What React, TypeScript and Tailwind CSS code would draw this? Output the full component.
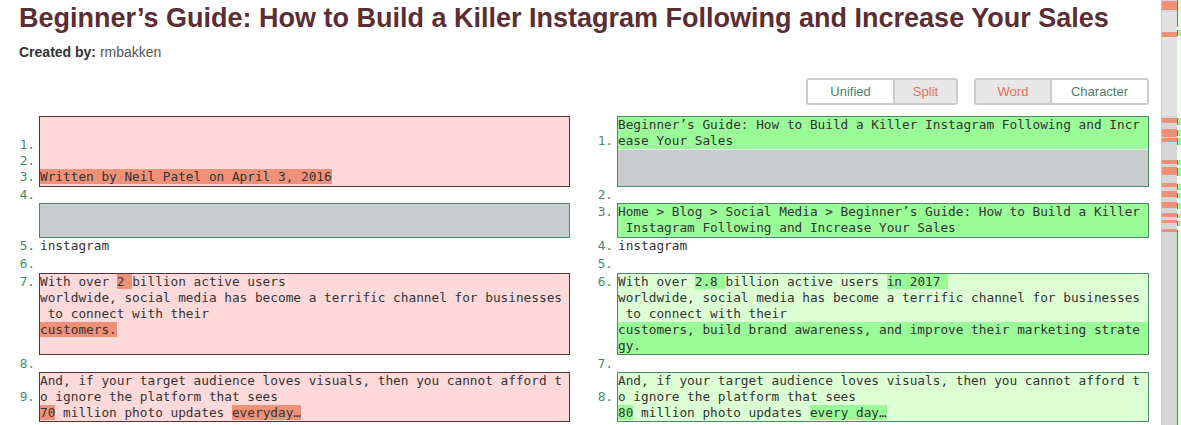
import React from "react";

const Del = ({ children }: { children: React.ReactNode }) => (
  <span className="bg-[#ee9178]">{children}</span>
);
const Add = ({ children }: { children: React.ReactNode }) => (
  <span className="bg-[#9afc98]">{children}</span>
);
const L = ({ children }: { children?: React.ReactNode }) => (
  <div className="h-[16px] whitespace-pre">{children}</div>
);

const Num = ({ pt, nums }: { pt: string; nums: string[] }) => (
  <div className={`text-right pr-[4px] text-[#468c6c] ${pt}`}>
    {nums.map((n) => (
      <div key={n} className="h-[16px]">
        {n}
      </div>
    ))}
  </div>
);

const redBlocks: [number, number][] = [
  [1, 10], [32, 37], [118, 123], [129, 137], [138, 142], [160, 164], [167, 175],
  [183, 187], [191, 197], [202, 208], [213, 217], [220, 223], [229, 232],
];
const greenMarks: [number, number][] = [
  [30, 36], [118, 125], [130, 136], [138, 145], [160, 165], [168, 176], [184, 190],
  [193, 198], [203, 209], [214, 218], [221, 226],
];

function Minimap() {
  return (
    <svg width="20" height="425" viewBox="0 0 20 425">
      <rect x="0" y="0" width="20" height="425" fill="#c9cacb" />
      <rect x="1" y="0" width="15" height="425" fill="#d6d6d6" />
      <rect x="1" y="12" width="15" height="104" fill="#e2e2e2" />
      {redBlocks.map(([a, b], i) => (
        <rect key={i} x="1" y={a} width="15" height={b - a} fill="#ee8f77" />
      ))}
      <rect x="16" y="0" width="4" height="425" fill="#f4fbf1" />
      <rect x="16" y="0" width="4" height="27" fill="#dfffd6" />
      <rect x="16" y="0" width="1" height="27" fill="#4a8a68" />
      {greenMarks.map(([a, b], i) => (
        <g key={i}>
          <rect x="16" y={a} width="4" height={b - a} fill="#9afc98" />
          <rect x="16" y={a} width="1" height={b - a} fill="#4a8a68" />
        </g>
      ))}
      <rect x="16" y="230" width="4" height="195" fill="#dfffd6" />
      <rect x="16" y="230" width="1" height="195" fill="#4a8a68" />
    </svg>
  );
}

export default function App() {
  return (
    <div className="flex w-[1181px] h-[425px] overflow-hidden bg-white font-['Liberation_Sans',Arial,sans-serif]">
      <div className="w-[1161px] shrink-0">
        <h1 className="pl-[19px] pt-[2px] text-[27px] leading-[32px] font-bold text-[#5b2d35] whitespace-nowrap">
          Beginner’s Guide: How to Build a Killer Instagram Following and Increase Your Sales
        </h1>
        <div className="pl-[19px] mt-[10px] text-[14px] leading-[16px] text-[#555]">
          <span className="font-bold text-[#333]">Created by:</span> rmbakken
        </div>
        <div className="flex justify-end gap-[16px] pr-[12px] mt-[18px] text-[13px]">
          <div className="flex h-[27px] border-2 border-[#cbcbcb] rounded-[3px] overflow-hidden">
            <div className="w-[85px] flex items-center justify-center text-[#4e7d6c] bg-white">Unified</div>
            <div className="w-[63px] flex items-center justify-center text-[#e0705a] bg-[#e7e7e7] border-l-2 border-[#cbcbcb]">Split</div>
          </div>
          <div className="flex h-[27px] border-2 border-[#cbcbcb] rounded-[3px] overflow-hidden">
            <div className="w-[74px] flex items-center justify-center text-[#e0705a] bg-[#e7e7e7]">Word</div>
            <div className="w-[97px] flex items-center justify-center text-[#4e7d6c] bg-white border-l-2 border-[#cbcbcb]">Character</div>
          </div>
        </div>

        <div className="mt-[11px] grid grid-cols-[39px_531px_47px_532px] grid-rows-[71px_16px_35px_17px_17px_83px_17px_50px] font-['DejaVu_Sans_Mono',monospace] text-[12.75px] leading-[16px] text-[#333]">
          {/* Row A */}
          <Num pt="pt-[21px]" nums={["1.", "2.", "3."]} />
          <div className="border border-[#5c2e36] bg-[#fdd9d9] pt-[20px]">
            <L />
            <L />
            <L>
              <Del>Written by Neil Patel on April 3, 2016</Del>
            </L>
          </div>
          <Num pt="pt-[17px]" nums={["1."]} />
          <div className="border border-[#4a8a68] flex flex-col">
            <div className="bg-[#9afc98] h-[32px]">
              <L>Beginner’s Guide: How to Build a Killer Instagram Following and Incr</L>
              <L>ease Your Sales</L>
            </div>
            <div className="flex-1 bg-[#c9cccf] border-t border-[#e4e6e6]" />
          </div>

          {/* Row B */}
          <Num pt="pt-0" nums={["4."]} />
          <div />
          <Num pt="pt-0" nums={["2."]} />
          <div />

          {/* Row C */}
          <div />
          <div className="border border-[#4a8a68] bg-[#c9cccf]" />
          <Num pt="pt-[1px]" nums={["3."]} />
          <div className="border border-[#4a8a68] bg-[#9afc98]">
            <L>Home &gt; Blog &gt; Social Media &gt; Beginner’s Guide: How to Build a Killer</L>
            <L> Instagram Following and Increase Your Sales</L>
          </div>

          {/* Row D */}
          <Num pt="pt-0" nums={["5."]} />
          <div className="pl-[1px]">
            <L>instagram</L>
          </div>
          <Num pt="pt-0" nums={["4."]} />
          <div className="pl-[1px]">
            <L>instagram</L>
          </div>

          {/* Row E */}
          <Num pt="pt-[1px]" nums={["6."]} />
          <div />
          <Num pt="pt-[1px]" nums={["5."]} />
          <div />

          {/* Row F */}
          <Num pt="pt-[2px]" nums={["7."]} />
          <div className="mt-[1px] h-[82px] border border-[#5c2e36] bg-[#fdd9d9]">
            <L>
              With over <Del>2 </Del>billion active users
            </L>
            <L>worldwide, social media has become a terrific channel for businesses</L>
            <L> to connect with their</L>
            <L>
              <Del>customers.</Del>
            </L>
          </div>
          <Num pt="pt-[2px]" nums={["6."]} />
          <div className="mt-[1px] h-[82px] border border-[#4a8a68] bg-[#ddffd4]">
            <L>
              With over <Add>2.8 </Add>billion active users <Add>in 2017 </Add>
            </L>
            <L>worldwide, social media has become a terrific channel for businesses</L>
            <L> to connect with their</L>
            <div className="bg-[#9afc98]">
              <L>customers, build brand awareness, and improve their marketing strate</L>
              <L>gy.</L>
            </div>
          </div>

          {/* Row G */}
          <Num pt="pt-[1px]" nums={["8."]} />
          <div />
          <Num pt="pt-[1px]" nums={["7."]} />
          <div />

          {/* Row H */}
          <Num pt="pt-[17px]" nums={["9."]} />
          <div className="h-[50px] border border-[#5c2e36] bg-[#fdd9d9]">
            <L>And, if your target audience loves visuals, then you cannot afford t</L>
            <L>o ignore the platform that sees</L>
            <L>
              <Del>70</Del> million photo updates <Del>everyday…</Del>
            </L>
          </div>
          <Num pt="pt-[17px]" nums={["8."]} />
          <div className="h-[50px] border border-[#4a8a68] bg-[#ddffd4]">
            <L>And, if your target audience loves visuals, then you cannot afford t</L>
            <L>o ignore the platform that sees</L>
            <L>
              <Add>80</Add> million photo updates <Add>every day…</Add>
            </L>
          </div>
        </div>
      </div>
      <div className="w-[20px] shrink-0">
        <Minimap />
      </div>
    </div>
  );
}
